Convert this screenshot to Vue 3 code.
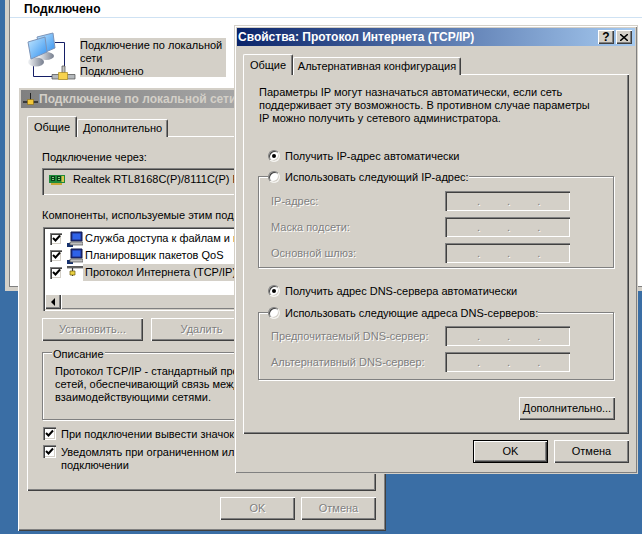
<script setup>
const ipFields = ['IP-адрес:', 'Маска подсети:', 'Основной шлюз:']
const dnsFields = ['Предпочитаемый DNS-сервер:', 'Альтернативный DNS-сервер:']
const components = [
  { text: 'Служба доступа к файлам и принтерам', icon: 'pc' },
  { text: 'Планировщик пакетов QoS', icon: 'pc' },
  { text: 'Протокол Интернета (TCP/IP)', icon: 'net', selected: true },
]
</script>

<template>
  <div class="desktop">
    <!-- Status window -->
    <section class="status-win">
      <div class="status-inner">
        <h1 class="status-title">Подключено</h1>
        <div class="status-row">
          <svg class="net-icon" viewBox="26 33 50 50" width="50" height="50">
            <defs>
              <linearGradient id="scr" x1="0" y1="0" x2="1" y2="1">
                <stop offset="0" stop-color="#c4e8ff" />
                <stop offset="1" stop-color="#2f8fef" />
              </linearGradient>
              <linearGradient id="base" x1="0" y1="0" x2="1" y2="0">
                <stop offset="0" stop-color="#f2f4f6" />
                <stop offset="1" stop-color="#767e8e" />
              </linearGradient>
            </defs>
            <path d="M55 43.5H64.5V68M33.5 65V77.5H52" fill="none" stroke="#141e66" stroke-width="1" />
            <ellipse cx="46" cy="57" rx="8" ry="4" fill="url(#base)" />
            <path d="M37 38L53 34L55 49L41 55Z" fill="url(#scr)" stroke="#7d94b8" />
            <ellipse cx="36" cy="63" rx="8" ry="4.5" fill="url(#base)" />
            <path d="M28 43L45 38L47 53L31 60Z" fill="url(#scr)" stroke="#7d94b8" />
            <path d="M52 75.5H75V80H52Z" fill="#b4b8bc" stroke="#4a4a4a" stroke-width=".7" />
            <path d="M62 67H65V74H62Z" fill="#c4c4c0" stroke="#4a4a4a" stroke-width=".7" />
            <path d="M58.5 73.5H67.5V80.5H58.5Z" fill="#f6d24e" stroke="#a88a20" stroke-width=".7" />
          </svg>
          <div class="status-text">
            Подключение по локальной сети<br />Подключено
          </div>
        </div>
      </div>
    </section>

    <!-- Connection properties -->
    <section class="win win-props">
      <header class="title inactive">
        <svg class="title-icon" viewBox="0 0 15 14" width="15" height="14">
          <path d="M7 1H8V8H7Z" fill="#222" />
          <path d="M0 9H15V11H0Z" fill="#3a3a3a" />
          <path d="M4.5 7.5H10.5V12.5H4.5Z" fill="#f2c83a" stroke="#8a6a10" stroke-width=".6" />
        </svg>
        <span>Подключение по локальной сети - свойства</span>
      </header>
      <div class="body">
        <div class="tabs">
          <span class="tab active props-general">Общие</span>
          <span class="tab props-extra">Дополнительно</span>
        </div>
        <div class="panel props-panel">
          <p class="line">Подключение через:</p>
          <div class="adapter">
            <svg viewBox="0 0 16 11" width="16" height="11">
              <path d="M0 1H16V9H0Z" fill="#1f8a3a" />
              <path d="M2 2H6V7H2ZM8 2H12V7H8Z" fill="#0c3f1a" />
              <path d="M3 3H5V4H3ZM3 5H5V6H3ZM9 3H11V4H9ZM9 5H11V6H9Z" fill="#7fd07f" />
              <path d="M12.5 2H15V8H12.5Z" fill="#d8c84a" />
              <path d="M2 9H13V11H2Z" fill="#c8a838" />
            </svg>
            <span>Realtek RTL8168C(P)/8111C(P) F</span>
          </div>
          <p class="line comp-label">Компоненты, используемые этим подключением:</p>
          <div class="list">
            <div class="list-rows">
              <div v-for="c in components" :key="c.text" class="list-row">
                <span class="check small"><svg viewBox="0 0 9 9" width="9" height="9"><path d="M1 4L3.5 6.5L8 1.5" fill="none" stroke="#000" stroke-width="2" /></svg></span>
                <svg v-if="c.icon === 'pc'" class="row-icon" viewBox="0 0 16 16" width="16" height="16">
                  <path d="M0 12H6V16H0Z" fill="#14306e" />
                  <path d="M4 1H15V10H4Z" fill="#20308a" stroke="#10184a" />
                  <path d="M5.5 2.5H13.5V8.5H5.5Z" fill="#2f62e8" />
                  <path d="M3 11H16V14H3Z" fill="#bfbfbf" stroke="#555" stroke-width=".7" />
                </svg>
                <svg v-else class="row-icon" viewBox="0 0 16 16" width="16" height="16">
                  <path d="M0 2H16" stroke="#111" stroke-width="1.4" />
                  <path d="M0 3.4H16" stroke="#bbb" stroke-width="1" />
                  <path d="M5.5 3V11" stroke="#333" stroke-width="1.2" />
                  <path d="M3 6H8V10H3Z" fill="#e8d040" stroke="#6a5a10" stroke-width=".7" />
                </svg>
                <span class="row-text" :class="{ selected: c.selected }">{{ c.text }}</span>
              </div>
            </div>
            <div class="scrollbar">
              <span class="scroll-btn"><svg viewBox="0 0 5 8" width="5" height="8"><path d="M4 0V8L0 4Z" fill="#000" /></svg></span>
              <span class="scroll-thumb"></span>
            </div>
          </div>
          <div class="comp-buttons">
            <span class="btn disabled install">Установить...</span>
            <span class="btn disabled remove">Удалить</span>
          </div>
          <div class="group desc">
            <span class="legend desc-legend">Описание</span>
            <p class="desc-text">
              Протокол TCP/IP - стандартный протокол<br />
              сетей, обеспечивающий связь между<br />
              взаимодействующими сетями.
            </p>
          </div>
          <label class="opt first">
            <span class="check"><svg viewBox="0 0 9 9" width="9" height="9"><path d="M1 4L3.5 6.5L8 1.5" fill="none" stroke="#000" stroke-width="2" /></svg></span>
            <span>При подключении вывести значок в области уведомлений</span>
          </label>
          <label class="opt">
            <span class="check"><svg viewBox="0 0 9 9" width="9" height="9"><path d="M1 4L3.5 6.5L8 1.5" fill="none" stroke="#000" stroke-width="2" /></svg></span>
            <span>Уведомлять при ограниченном или отсутствующем<br />подключении</span>
          </label>
        </div>
        <footer class="footer props-footer">
          <span class="btn disabled">OK</span>
          <span class="btn disabled">Отмена</span>
        </footer>
      </div>
    </section>

    <!-- TCP/IP properties -->
    <section class="win win-tcp">
      <header class="title">
        <span>Свойства: Протокол Интернета (TCP/IP)</span>
        <div class="caption-btns">
          <span class="cap-btn">?</span>
          <span class="cap-btn close"><svg viewBox="0 0 8 7" width="8" height="7"><path d="M0 0L8 7M8 0L0 7" stroke="#000" stroke-width="1.5" /></svg></span>
        </div>
      </header>
      <div class="body">
        <div class="tabs">
          <span class="tab active tcp-general">Общие</span>
          <span class="tab tcp-alt">Альтернативная конфигурация</span>
        </div>
        <div class="panel tcp-panel">
          <p class="intro">
            Параметры IP могут назначаться автоматически, если сеть<br />
            поддерживает эту возможность. В противном случае параметры<br />
            IP можно получить у сетевого администратора.
          </p>
          <div class="radio-row first-radio">
            <span class="radio on"></span>Получить IP-адрес автоматически
          </div>
          <div class="group ip-group">
            <div class="legend radio-row"><span class="radio"></span>Использовать следующий IP-адрес:</div>
            <div v-for="f in ipFields" :key="f" class="field">
              <span class="field-label">{{ f }}</span>
              <span class="ip-box"><i>.</i><i>.</i><i>.</i></span>
            </div>
          </div>
          <div class="radio-row dns-radio">
            <span class="radio on"></span>Получить адрес DNS-сервера автоматически
          </div>
          <div class="group dns-group">
            <div class="legend radio-row"><span class="radio"></span>Использовать следующие адреса DNS-серверов:</div>
            <div v-for="f in dnsFields" :key="f" class="field">
              <span class="field-label">{{ f }}</span>
              <span class="ip-box"><i>.</i><i>.</i><i>.</i></span>
            </div>
          </div>
          <div class="advanced-row">
            <span class="btn advanced">Дополнительно...</span>
          </div>
        </div>
        <footer class="footer tcp-footer">
          <span class="btn default">OK</span>
          <span class="btn">Отмена</span>
        </footer>
      </div>
    </section>
  </div>
</template>

<style>
html, body { margin: 0; background: #3a6ea5; }
</style>

<style scoped>
.desktop {
  position: relative;
  width: 642px;
  height: 534px;
  overflow: hidden;
  background: #3a6ea5;
  font: 11px/13px "Liberation Sans", Arial, sans-serif;
  color: #000;
}
p, h1 { margin: 0; }

/* Back window */
.status-win {
  position: absolute;
  left: 5px;
  top: 0;
  width: 700px;
  height: 291px;
  box-sizing: border-box;
  padding: 0 0 4px 4px;
  background: #d4d0c8;
}
.status-inner {
  height: 100%;
  box-sizing: border-box;
  background: #fff;
  border-left: 1px solid #808080;
  border-bottom: 1px solid #808080;
}
.status-title {
  height: 18px;
  box-sizing: border-box;
  padding: 3px 0 0 14px;
  font-size: 12px;
  letter-spacing: 0.15px;
  font-weight: 700;
  border-bottom: 1px solid #cfe2f3;
}
.status-row {
  display: flex;
  align-items: flex-start;
  gap: 4px;
  padding: 14px 0 0 16px;
}
.net-icon { flex: none; }
.status-text {
  width: 146px;
  height: 39px;
  box-sizing: border-box;
  padding-top: 1px;
  margin-top: 6px;
  background: #d4d0c8;
}

/* Dialog chrome */
.win {
  position: absolute;
  box-sizing: border-box;
  padding: 3px;
  display: flex;
  flex-direction: column;
  background: #d4d0c8;
  box-shadow: inset 1px 1px 0 #fff, inset -1px -1px 0 #404040, inset -2px -2px 0 #808080;
}
.win-props { left: 18px; top: 87px; width: 368px; height: 444px; }
.win-tcp { left: 234px; top: 25px; width: 404px; height: 449px; outline: 1px solid #d4d0c8; outline-offset: -1px; box-shadow: inset 2px 2px 0 #fff, inset -1px -1px 0 #404040, inset -2px -2px 0 #808080; }
.title {
  flex: none;
  height: 18px;
  display: flex;
  align-items: center;
  gap: 1px;
  padding: 0 3px 0 1px;
  color: #fff;
  font-weight: 700;
  font-size: 12px;
  white-space: nowrap;
  background: linear-gradient(90deg, #0a246a, #a6caf0);
}
.title.inactive {
  padding-left: 2px;
  color: #d4d0c8;
  background: linear-gradient(90deg, #808080, #c0c0c0);
}
.title-icon { flex: none; }
.caption-btns { margin-left: auto; display: flex; gap: 2px; }
.cap-btn {
  width: 16px;
  height: 14px;
  display: flex;
  align-items: center;
  justify-content: center;
  color: #000;
  font-weight: 700;
  font-size: 12px;
  background: #d4d0c8;
  box-shadow: inset 1px 1px 0 #fff, inset -1px -1px 0 #404040, inset -2px -2px 0 #808080;
}
.body { flex: 1; display: flex; flex-direction: column; padding: 8px 0 0 6px; min-height: 0; }
.tabs { display: flex; align-items: flex-end; position: relative; z-index: 1; margin-bottom: -1px; }
.tab {
  box-sizing: border-box;
  height: 18px;
  display: flex;
  align-items: center;
  justify-content: center;
  background: #d4d0c8;
  border-radius: 2px 2px 0 0;
  border-top: 1px solid #fff;
  border-left: 1px solid #fff;
  border-right: 1px solid #404040;
  box-shadow: inset -1px 0 0 #808080;
}
.tab.active { height: 21px; }
.props-general { width: 50px; }
.props-extra { width: 91px; }
.tcp-general { width: 50px; }
.tcp-alt { width: 168px; }
.panel {
  box-sizing: border-box;
  flex: none;
  background: #d4d0c8;
  box-shadow: inset 1px 1px 0 #fff, inset -1px -1px 0 #404040, inset -2px -2px 0 #808080;
}
.props-panel { width: 349px; height: 355px; padding: 15px 15px 0; }
.tcp-panel { width: 386px; height: 360px; padding: 12px 15px 0; }
.footer { display: flex; justify-content: flex-end; gap: 6px; }
.props-footer { width: 349px; margin-top: 6px; }
.tcp-footer { width: 386px; margin-top: 6px; }

.btn {
  box-sizing: border-box;
  width: 75px;
  height: 23px;
  display: flex;
  align-items: center;
  justify-content: center;
  background: #d4d0c8;
  box-shadow: inset 1px 1px 0 #fff, inset -1px -1px 0 #404040, inset -2px -2px 0 #808080;
}
.btn.disabled { color: #808080; text-shadow: 1px 1px 0 #fff; }
.btn.default { border: 1px solid #000; }
.install { width: 101px; }
.remove { width: 101px; }

/* Props window contents */
.adapter {
  box-sizing: border-box;
  height: 27px;
  margin-top: 4px;
  display: flex;
  align-items: center;
  gap: 8px;
  padding: 0 0 4px 7px;
  white-space: nowrap;
  overflow: hidden;
  box-shadow: inset 1px 1px 0 #808080, inset 2px 2px 0 #404040, inset -1px -1px 0 #fff;
}
.comp-label { margin-top: 14px; white-space: nowrap; }
.list {
  box-sizing: border-box;
  height: 84px;
  margin: 5px 0 0 1px;
  padding: 2px;
  display: flex;
  flex-direction: column;
  background: #fff;
  overflow: hidden;
  box-shadow: inset 1px 1px 0 #808080, inset 2px 2px 0 #404040, inset -1px -1px 0 #fff, inset -2px -2px 0 #d4d0c8;
}
.list-rows { flex: 1; padding-top: 1px; }
.list-row { height: 17px; display: flex; align-items: center; white-space: nowrap; padding-left: 5px; }
.row-icon { flex: none; margin-left: 5px; }
.row-text { padding: 2px; height: 17px; box-sizing: border-box; line-height: 13px; flex: 1; }
.row-text.selected { background: #d4d0c8; }
.scrollbar { flex: none; height: 15px; display: flex; background: #f1efec; }
.scroll-btn {
  flex: none;
  width: 16px;
  display: flex;
  align-items: center;
  justify-content: center;
  background: #d4d0c8;
  box-shadow: inset 1px 1px 0 #fff, inset -1px -1px 0 #404040, inset -2px -2px 0 #808080;
}
.scroll-thumb {
  flex: 1;
  background: #d4d0c8;
  box-shadow: inset 1px 1px 0 #fff, inset -1px -1px 0 #808080;
}
.comp-buttons { display: flex; gap: 8px; margin-top: 7px; }
.group {
  position: relative;
  box-sizing: border-box;
  border: 1px solid #808080;
  box-shadow: inset 1px 1px 0 #fff, 1px 1px 0 #fff;
}
.legend {
  position: absolute;
  top: -10px;
  left: 9px;
  background: #d4d0c8;
  white-space: nowrap;
}
.desc { height: 68px; margin-top: 11px; padding: 12px 0 0 12px; }
.desc-legend { top: -5px; padding: 0 1px; }
.desc-text { white-space: nowrap; }
.opt { display: flex; align-items: flex-start; gap: 5px; margin: 4px 0 0 1px; white-space: nowrap; }
.opt.first { margin-top: 7px; }
.opt > span:last-child { padding-top: 1px; }
.check {
  flex: none;
  box-sizing: border-box;
  width: 13px;
  height: 13px;
  display: flex;
  align-items: center;
  justify-content: center;
  background: #fff;
  box-shadow: inset 1px 1px 0 #808080, inset 2px 2px 0 #404040, inset -1px -1px 0 #fff, inset -2px -2px 0 #d4d0c8;
}
.check.small { width: 12px; height: 12px; }

/* TCP window contents */
.intro { padding-left: 1px; white-space: nowrap; }
.radio-row { height: 20px; display: flex; align-items: center; gap: 5px; white-space: nowrap; }
.first-radio { margin: 21px 0 0 10px; }
.radio {
  flex: none;
  box-sizing: border-box;
  width: 12px;
  height: 12px;
  position: relative;
  border-radius: 50%;
  background: #fff;
  border: 1px solid;
  border-color: #808080 #f4f3f0 #f4f3f0 #808080;
  box-shadow: inset 1px 1px 0 #404040, inset -1px -1px 0 #d4d0c8;
}
.radio.on::after {
  content: "";
  position: absolute;
  left: 3px;
  top: 3px;
  width: 4px;
  height: 4px;
  border-radius: 50%;
  background: #000;
}
.ip-group { height: 92px; margin-top: 10px; padding: 14px 0 0 12px; display: flex; flex-direction: column; gap: 6px; }
.dns-group { height: 68px; margin-top: 11px; padding: 13px 0 0 12px; display: flex; flex-direction: column; gap: 6px; }
.dns-radio { margin: 13px 0 0 10px; }
.field { display: grid; grid-template-columns: 174px 125px; align-items: center; height: 20px; }
.field-label { color: #808080; text-shadow: 1px 1px 0 #fff; white-space: nowrap; }
.ip-box {
  height: 20px;
  box-sizing: border-box;
  padding-left: 32px;
  display: flex;
  gap: 27px;
  align-items: center;
  color: #808080;
  text-shadow: 1px 1px 0 #fff;
  box-shadow: inset 1px 1px 0 #808080, inset 2px 2px 0 #404040, inset -1px -1px 0 #fff, inset -2px -2px 0 #d4d0c8;
}
.ip-box i { font-style: normal; }
.advanced-row { display: flex; justify-content: flex-end; margin: 17px -1px 0 0; }
.advanced { width: 96px; }
</style>
